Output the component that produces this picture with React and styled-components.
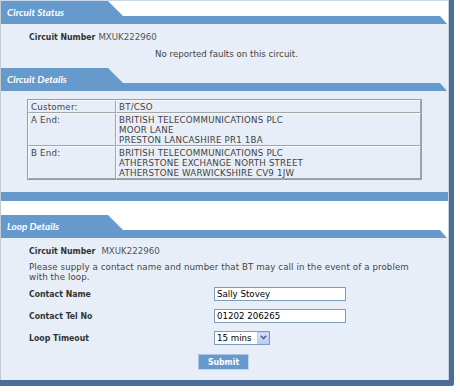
import React from 'react'
import styled, { createGlobalStyle } from 'styled-components'

const Global = createGlobalStyle`
  body {
    margin: 0;
    background: #fff;
    font-family: "DejaVu Sans", Verdana, sans-serif;
    color: #333;
  }
`

const BLUE = '#6699cc'
const DARK = '#4b6e98'
const LIGHT = '#e8eef7'

const Frame = styled.div`
  width: 449px;
  border-right: 5px solid ${DARK};
  border-bottom: 6px solid ${DARK};
  border-bottom-right-radius: 3px;
`

const Inner = styled.div`
  border-left: 1px solid #c2cad4;
  border-right: 1px solid #c8d0da;
  border-top: 1px solid #c9d8ea;
`

const Header = styled.div`
  display: flex;
  align-items: flex-end;
  height: 23px;
  background: ${p => (p.$onWhite ? '#fff' : LIGHT)};
`

const Tab = styled.div`
  width: 122px;
  height: 100%;
  flex: none;
  box-sizing: border-box;
  padding-left: 6px;
  background: ${BLUE};
  clip-path: polygon(0 0, 107px 0, 122px 15px, 122px 100%, 0 100%);
  color: #fff;
  font-family: Lato, "Liberation Sans", sans-serif;
  font-style: italic;
  font-weight: 700;
  font-size: 10px;
  line-height: 23px;
  white-space: nowrap;
`

const Bar = styled.div`
  flex: 1;
  height: 8px;
  margin-right: 1px;
  background: ${BLUE};
  clip-path: polygon(0 0, calc(100% - 7px) 0, 100% 100%, 0 100%);
`

const Body = styled.div`
  background: ${LIGHT};
  padding: ${p => p.$pad || '8px 0 9px 28px'};
  font-size: 8.67px;
  line-height: 10px;
`

const FooterBar = styled.div`
  height: 9px;
  background: ${BLUE};
`

const Gap = styled.div`
  height: 14px;
  background: #fff;
`

const Label = styled.span`
  font-family: "DejaVu Sans Condensed", "DejaVu Sans", sans-serif;
  font-stretch: condensed;
  font-weight: 700;
  color: #333;
  margin-right: ${p => p.$gap || 0}px;
`

const Value = styled.span`
  color: #555;
`

const Message = styled.div`
  margin-top: 7px;
  text-align: center;
  padding-right: 24px;
  color: #444;
`

const Table = styled.table`
  width: 395px;
  border-collapse: separate;
  border-spacing: 0;
  border: 1px solid #9c9c9c;
  font-size: 8.67px;
  line-height: 10px;
  letter-spacing: 0.2px;
  color: #444;

  td {
    vertical-align: top;
    padding: 1px 2px 0;
    border-top: 1px solid #f7f9fc;
    border-left: 1px solid #f7f9fc;
    border-right: 1px solid #a4a4a4;
    border-bottom: 1px solid #a4a4a4;
  }
  td:first-child {
    width: 82px;
  }
`

const Para = styled.p`
  margin: 6px 0 0;
  width: 392px;
  letter-spacing: 0.1px;
  color: #444;
`

const Form = styled.div`
  display: grid;
  grid-template-columns: 185px auto;
  grid-auto-rows: 15px;
  row-gap: 7px;
  align-items: center;
  margin-top: 4px;
`

const TextInput = styled.input`
  width: 132px;
  height: 14px;
  box-sizing: border-box;
  border: 1px solid #7f9db9;
  background: #fff;
  padding: 0 2px;
  font-family: "DejaVu Sans", sans-serif;
  font-size: 8.67px;
  color: #000;
  outline: none;
`

const SelectWrap = styled.div`
  position: relative;
  width: 56px;
  height: 14px;
`

const Select = styled.select`
  appearance: none;
  width: 56px;
  height: 14px;
  box-sizing: border-box;
  border: 1px solid #7f9db9;
  border-radius: 0;
  background: #fff;
  padding: 0 0 0 2px;
  font-family: "DejaVu Sans", sans-serif;
  font-size: 8.67px;
  line-height: 12px;
  color: #000;
  outline: none;
`

const Arrow = styled.span`
  position: absolute;
  top: 1px;
  right: 1px;
  width: 12px;
  height: 12px;
  box-sizing: border-box;
  border: 1px solid #b8cdf7;
  background: linear-gradient(#d4e0fb, #b9cdf5);
  display: flex;
  align-items: center;
  justify-content: center;
  pointer-events: none;
`

const ButtonRow = styled.div`
  margin-top: 9px;
  padding-right: 30px;
  text-align: center;
`

const Submit = styled.button`
  width: 51px;
  height: 16px;
  padding: 0;
  border: 1px solid #a9c4e2;
  border-right-color: #c6d6ea;
  border-bottom-color: #c6d6ea;
  background: ${BLUE};
  color: #fff;
  font-family: "DejaVu Sans Condensed", "DejaVu Sans", sans-serif;
  font-stretch: condensed;
  font-weight: 700;
  font-size: 8.67px;
  line-height: 14px;
`

const SectionHeader = ({ title, onWhite }) => (
  <Header $onWhite={onWhite}>
    <Tab>{title}</Tab>
    <Bar />
  </Header>
)

export default function App() {
  return (
    <>
      <Global />
      <Frame>
        <Inner>
          <SectionHeader title="Circuit Status" onWhite />
          <Body>
            <div>
              <Label $gap={3}>Circuit Number</Label>
              <Value>MXUK222960</Value>
            </div>
            <Message>No reported faults on this circuit.</Message>
          </Body>

          <SectionHeader title="Circuit Details" />
          <Body $pad="8px 0 12px 26px">
            <Table>
              <tbody>
                <tr>
                  <td>Customer:</td>
                  <td>BT/CSO</td>
                </tr>
                <tr>
                  <td>A End:</td>
                  <td>
                    BRITISH TELECOMMUNICATIONS PLC<br />
                    MOOR LANE<br />
                    PRESTON LANCASHIRE PR1 1BA
                  </td>
                </tr>
                <tr>
                  <td>B End:</td>
                  <td>
                    BRITISH TELECOMMUNICATIONS PLC<br />
                    ATHERSTONE EXCHANGE NORTH STREET<br />
                    ATHERSTONE WARWICKSHIRE CV9 1JW
                  </td>
                </tr>
              </tbody>
            </Table>
          </Body>
          <FooterBar />
          <Gap />

          <SectionHeader title="Loop Details" onWhite />
          <Body $pad="8px 0 10px 28px">
            <div>
              <Label $gap={6}>Circuit Number</Label>
              <Value>MXUK222960</Value>
            </div>
            <Para>
              Please supply a contact name and number that BT may call in the event of a problem
              with the loop.
            </Para>
            <Form>
              <Label>Contact Name</Label>
              <TextInput defaultValue="Sally Stovey" />
              <Label>Contact Tel No</Label>
              <TextInput defaultValue="01202 206265" />
              <Label>Loop Timeout</Label>
              <SelectWrap>
                <Select defaultValue="15">
                  <option value="5">5 mins</option>
                  <option value="10">10 mins</option>
                  <option value="15">15 mins</option>
                  <option value="30">30 mins</option>
                </Select>
                <Arrow>
                  <svg width="7" height="5" viewBox="0 0 7 5">
                    <path d="M0.8 0.8 L3.5 3.6 L6.2 0.8" fill="none" stroke="#4d6185" strokeWidth="1.5" />
                  </svg>
                </Arrow>
              </SelectWrap>
            </Form>
            <ButtonRow>
              <Submit type="button">Submit</Submit>
            </ButtonRow>
          </Body>
        </Inner>
      </Frame>
    </>
  )
}
